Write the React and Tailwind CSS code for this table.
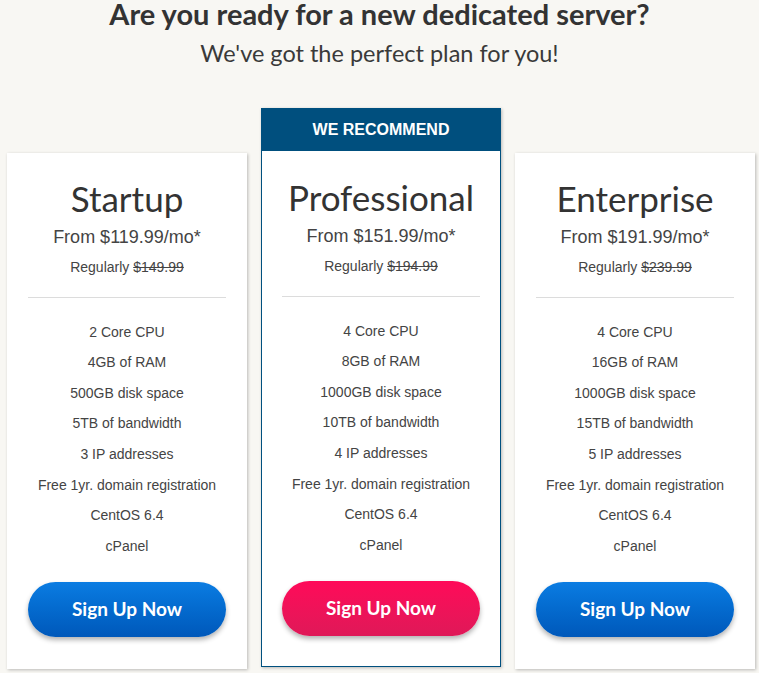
import React from "react";

const plans = [
  {
    name: "Startup",
    price: "From $119.99/mo*",
    regular: "$149.99",
    features: ["2 Core CPU", "4GB of RAM", "500GB disk space", "5TB of bandwidth", "3 IP addresses", "Free 1yr. domain registration", "CentOS 6.4", "cPanel"],
  },
  {
    name: "Professional",
    price: "From $151.99/mo*",
    regular: "$194.99",
    features: ["4 Core CPU", "8GB of RAM", "1000GB disk space", "10TB of bandwidth", "4 IP addresses", "Free 1yr. domain registration", "CentOS 6.4", "cPanel"],
    featured: true,
  },
  {
    name: "Enterprise",
    price: "From $191.99/mo*",
    regular: "$239.99",
    features: ["4 Core CPU", "16GB of RAM", "1000GB disk space", "15TB of bandwidth", "5 IP addresses", "Free 1yr. domain registration", "CentOS 6.4", "cPanel"],
  },
];

function CardBody({ plan }) {
  return (
    <div className="flex flex-col items-center">
      <div className="pt-[25px] text-[35px] leading-[40px] text-[#333] font-['Lato',sans-serif]">{plan.name}</div>
      <div className="mt-[7px] text-[18px] leading-[24px] text-[#444] font-['Liberation_Sans',Arial,sans-serif]">{plan.price}</div>
      <div className="mt-[8px] text-[14px] leading-[20px] text-[#444] font-['Liberation_Sans',Arial,sans-serif]">
        Regularly <span className="line-through">{plan.regular}</span>
      </div>
      <div className="mt-[20px] h-px w-[198px] bg-[#dcdcdc]" />
      <ul className="mt-[18.7px] flex flex-col items-center text-[14px] leading-[30.6px] text-[#444] font-['Liberation_Sans',Arial,sans-serif]">
        {plan.features.map((f) => (
          <li key={f}>{f}</li>
        ))}
      </ul>
      <button
        className={
          "mt-[20.7px] h-[55px] w-[198px] rounded-full text-white text-[19px] font-bold font-['Lato',sans-serif] shadow-[0_3px_5px_rgba(0,0,0,0.3)] " +
          (plan.featured
            ? "bg-gradient-to-b from-[#ff0959] to-[#df1858]"
            : "bg-gradient-to-b from-[#0b7ce2] to-[#0058ba]")
        }
      >
        Sign Up Now
      </button>
    </div>
  );
}

export default function App() {
  return (
    <div className="min-h-[673px] w-full bg-[#f8f7f3] overflow-hidden">
      <div className="flex flex-col items-center">
        <h1 className="mt-[-6px] text-[29px] leading-[40px] font-bold text-[#333] font-['Lato',sans-serif]">
          Are you ready for a new dedicated server?
        </h1>
        <p className="mt-[4px] text-[23.5px] leading-[30px] font-normal text-[#3a3a3a] font-['Lato',sans-serif]">
          We've got the perfect plan for you!
        </p>
      </div>
      <div className="mt-[40px] flex items-start gap-[14px] pl-[7px]">
        <div className="mt-[45px] w-[240px] bg-white pb-[32px] shadow-[1px_1px_3px_rgba(0,0,0,0.25)]">
          <CardBody plan={plans[0]} />
        </div>
        <div className="w-[240px] border border-[#00507f] bg-white shadow-[1px_1px_3px_rgba(0,0,0,0.25)]">
          <div className="flex h-[42px] items-center justify-center bg-[#004f7e] text-[16px] font-bold text-white font-['Liberation_Sans',Arial,sans-serif]">
            WE RECOMMEND
          </div>
          <div className="mt-[1px] pb-[30px]">
            <CardBody plan={plans[1]} />
          </div>
        </div>
        <div className="mt-[45px] w-[240px] bg-white pb-[32px] shadow-[1px_1px_3px_rgba(0,0,0,0.25)]">
          <CardBody plan={plans[2]} />
        </div>
      </div>
    </div>
  );
}
